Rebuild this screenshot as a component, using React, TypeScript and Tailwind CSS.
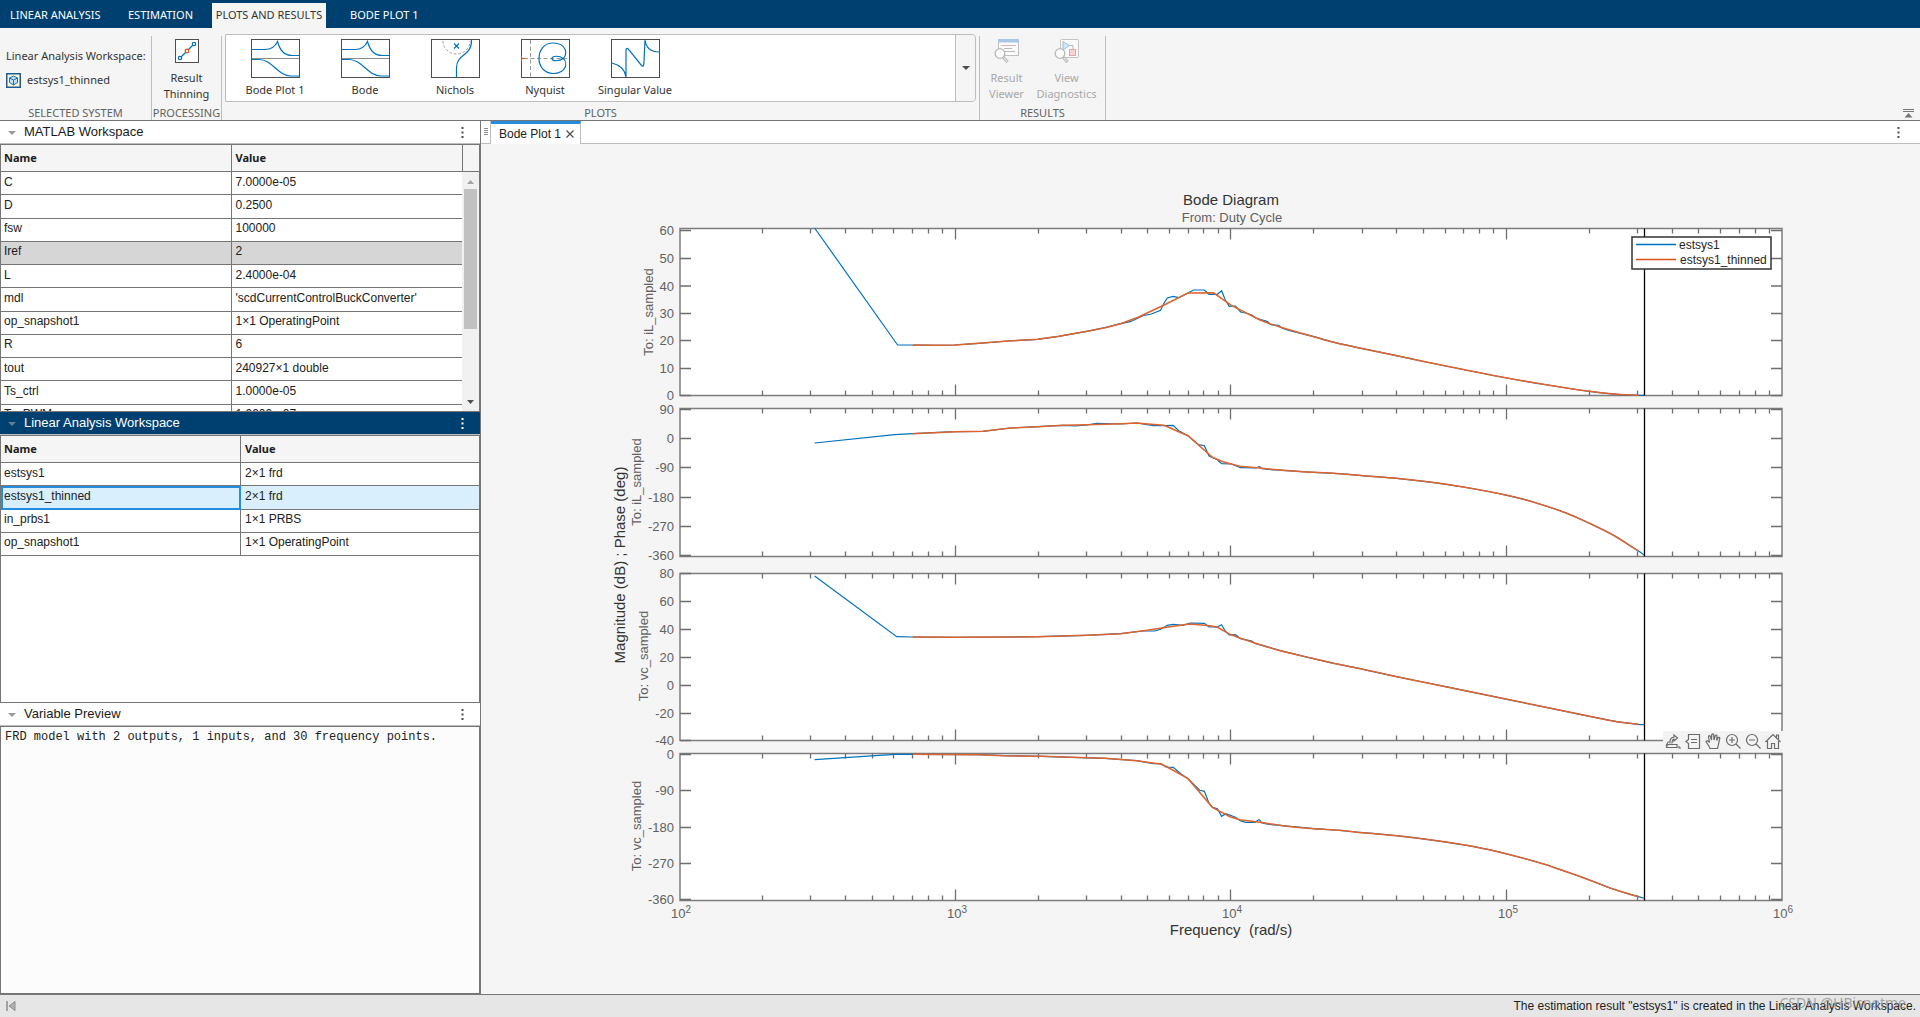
import type { ReactNode } from "react";

const UI = "font-['Noto_Sans','Open_Sans',sans-serif]";

/* ---------- toolstrip icons ---------- */

function PlotFrame({ children }: { children: ReactNode }) {
  return (
    <svg width="49" height="39" viewBox="0 0 49 39" fill="none" aria-hidden="true">
      <rect x="0.5" y="0.5" width="48" height="38" fill="#fff" stroke="#4d4d4d" />
      {children}
    </svg>
  );
}

function BodeIcon() {
  return (
    <PlotFrame>
      <path d="M1 19.5H48" stroke="#8c8c8c" />
      <path d="M1 10.5H14C20 10.5 24 8 26.500 2.500C28.500 10 32 16.500 41 16.500H48" stroke="#0072bd" strokeWidth="1.200" />
      <path d="M1 20.5H8C21 20.500 27 37 40 37H48" stroke="#0072bd" strokeWidth="1.200" />
    </PlotFrame>
  );
}

function NicholsIcon() {
  return (
    <PlotFrame>
      <path d="M12 2A13.500 13 0 0 0 39 2" stroke="#999" strokeDasharray="2.500 2" />
      <path d="M23 4.500L28 9.500M28 4.500L23 9.500" stroke="#0072bd" strokeWidth="1.200" />
      <path d="M40.500 1C41 18 25.500 14 25.500 29V38" stroke="#0072bd" strokeWidth="1.200" />
    </PlotFrame>
  );
}

function NyquistIcon() {
  return (
    <PlotFrame>
      <path d="M9.500 1V38" stroke="#999" strokeDasharray="4 2.500" />
      <path d="M3 19.500H46" stroke="#999" strokeDasharray="4 2.500" />
      <path d="M0.500 17V22M0 19.500H4" stroke="#d95319" strokeWidth="1.200" />
      <path
        d="M42 19.500C47 16 46 4 32 4C23 4 18 11 18 19.500C18 28 24 34.500 32 34.500C46 34.500 47 23 42 19.500C39 16.500 31 16.500 31 19.500C31 22.500 39 22.500 42 19.500"
        stroke="#0072bd"
        strokeWidth="1.200"
      />
    </PlotFrame>
  );
}

function SingularIcon() {
  return (
    <PlotFrame>
      <path
        d="M1 24C9 26 14 31 15 38V10.500Q16 8 18 11L30.500 26.500Q33 29 33 22L34 1C35 8 39 13 48 13"
        stroke="#0072bd"
        strokeWidth="1.200"
      />
    </PlotFrame>
  );
}

function ThinningIcon() {
  return (
    <svg width="24" height="24" viewBox="0 0 24 24" fill="none" aria-hidden="true">
      <rect x="0.5" y="0.5" width="23" height="23" fill="#fff" stroke="#4d4d4d" />
      <path d="M5 19L19 5" stroke="#0072bd" strokeWidth="1.300" />
      <circle cx="5" cy="19" r="1.700" fill="#fff" stroke="#0072bd" strokeWidth="1.200" />
      <circle cx="19" cy="5" r="1.700" fill="#fff" stroke="#0072bd" strokeWidth="1.200" />
      <circle cx="12" cy="12" r="1.800" fill="#fff" stroke="#d95319" strokeWidth="1.300" />
    </svg>
  );
}

function CubeIcon() {
  return (
    <svg width="15" height="15" viewBox="0 0 15 15" fill="none" aria-hidden="true">
      <rect x="0.75" y="0.75" width="13.500" height="13.500" fill="#fdf6d0" stroke="#1f5c99" strokeWidth="1.500" />
      <path d="M7.500 3L11.500 5V9.500L7.500 12L3.500 9.500V5Z" fill="#bfe0f7" stroke="#1f6fb5" strokeLinejoin="round" />
      <path d="M3.500 5L7.500 7L11.500 5M7.500 7V12" stroke="#1f6fb5" />
    </svg>
  );
}

function Magnifier() {
  return (
    <>
      <circle cx="6" cy="14.500" r="4.800" fill="#fbfbfb" stroke="#b8b8b8" strokeWidth="1.300" />
      <path d="M9.500 18.500L13.500 23" stroke="#b8b8b8" strokeWidth="3.200" />
      <path d="M10 19L13.200 22.600" stroke="#e4e4e4" strokeWidth="1.200" />
    </>
  );
}

function ResultViewerIcon() {
  return (
    <svg width="25" height="24" viewBox="0 0 25 24" fill="none" aria-hidden="true">
      <rect x="4.500" y="0.500" width="20" height="16" fill="#fbfbfb" stroke="#bdbdbd" />
      <rect x="4" y="0" width="21" height="3.500" fill="#a9c6e6" />
      <path d="M7 6.500H22" stroke="#e0b5ab" />
      <path d="M10 9.500H18M11 12.500H21" stroke="#b8b8b8" />
      <Magnifier />
    </svg>
  );
}

function DiagnosticsIcon() {
  return (
    <svg width="25" height="24" viewBox="0 0 25 24" fill="none" aria-hidden="true">
      <rect x="6.500" y="0.500" width="18" height="18" rx="1" fill="#fafafa" stroke="#c4c4c4" />
      <path d="M9 2.500V11L15.500 6.500Z" fill="#d4e6f7" stroke="#9dbfe0" />
      <path d="M15.500 6.500H19V10" stroke="#b8b8b8" />
      <rect x="15.500" y="10.500" width="6" height="6" fill="#f9d3d3" stroke="#e3a6a6" />
      <Magnifier />
    </svg>
  );
}

/* ---------- header bar and toolstrip ---------- */

function TabBar() {
  return (
    <nav role="tablist" className={`flex h-7 items-end bg-[#004070] pl-0.5 text-[11px] text-white ${UI}`}>
      <button type="button" role="tab" aria-selected="false" className="h-[25px] w-[106px] whitespace-nowrap pl-2 text-left">
        LINEAR ANALYSIS
      </button>
      <button type="button" role="tab" aria-selected="false" className="h-[25px] w-[104px] pl-5 text-left">
        ESTIMATION
      </button>
      <button type="button" role="tab" aria-selected="true" className="h-[25px] w-[114px] whitespace-nowrap bg-[#f5f5f5] text-center text-[#333]">
        PLOTS AND RESULTS
      </button>
      <button type="button" role="tab" aria-selected="false" className="ml-2 h-[25px] px-4">
        BODE PLOT 1
      </button>
    </nav>
  );
}

function GroupLabel({ children }: { children: ReactNode }) {
  return <div className="mt-auto text-center leading-[14px] text-[#616161]">{children}</div>;
}

const GALLERY = [
  { label: "Bode Plot 1", icon: <BodeIcon /> },
  { label: "Bode", icon: <BodeIcon /> },
  { label: "Nichols", icon: <NicholsIcon /> },
  { label: "Nyquist", icon: <NyquistIcon /> },
  { label: "Singular Value", icon: <SingularIcon /> },
];

function Toolstrip() {
  return (
    <div className={`flex h-[93px] items-stretch border-b border-[#767676] bg-[#f5f5f5] pt-2 text-[11px] text-[#333] ${UI}`}>
      <section className="flex w-[152px] flex-col border-r border-[#bdbdbd]">
        <div className="mt-3 pl-1.5 leading-4">Linear Analysis Workspace:</div>
        <div className="mt-2 flex items-center gap-1.5 pl-1.5 leading-4">
          <CubeIcon />
          <span>estsys1_thinned</span>
        </div>
        <GroupLabel>SELECTED SYSTEM</GroupLabel>
      </section>

      <section className="flex w-[70px] flex-col border-r border-[#bdbdbd]">
        <button type="button" className="flex flex-col items-center pt-[3px] leading-4">
          <ThinningIcon />
          <span className="mt-[7px]">
            Result
            <br />
            Thinning
          </span>
        </button>
        <GroupLabel>PROCESSING</GroupLabel>
      </section>

      <section className="flex w-[758px] flex-col border-r border-[#bdbdbd] pl-[3px] pr-[3px]">
        <div className="-mt-0.5 flex h-[68px] rounded-r border border-[#bdbdbd] bg-white">
          <div className="flex grow pl-1">
            {GALLERY.map((g) => (
              <button key={g.label} type="button" className="flex w-[90px] flex-col items-center pt-1">
                {g.icon}
                <span className="mt-1 leading-4">{g.label}</span>
              </button>
            ))}
          </div>
          <button
            type="button"
            aria-label="More plots"
            className="flex w-5 items-center justify-center rounded-r border-l border-[#bdbdbd] bg-[#f5f5f5]"
          >
            <svg width="8" height="4" viewBox="0 0 8 4" aria-hidden="true">
              <path d="M0 0H8L4 4Z" fill="#4d4d4d" />
            </svg>
          </button>
        </div>
        <GroupLabel>PLOTS</GroupLabel>
      </section>

      <section className="flex w-[126px] flex-col border-r border-[#bdbdbd]">
        <div className="flex pt-[3px]">
          <button type="button" disabled className="flex w-[53px] flex-col items-center leading-4 text-[#a8a8a8]">
            <ResultViewerIcon />
            <span className="mt-[7px]">
              Result
              <br />
              Viewer
            </span>
          </button>
          <button type="button" disabled className="flex w-[67px] flex-col items-center leading-4 text-[#a8a8a8]">
            <DiagnosticsIcon />
            <span className="mt-[7px]">
              View
              <br />
              Diagnostics
            </span>
          </button>
        </div>
        <GroupLabel>RESULTS</GroupLabel>
      </section>

      <button type="button" aria-label="Collapse toolstrip" className="ml-auto mr-1.5 self-end pb-0.5">
        <svg width="11" height="9" viewBox="0 0 11 9" fill="none" aria-hidden="true">
          <path d="M0 0.500H11M0 2.500H11" stroke="#767676" />
          <path d="M5.500 4L9.500 8.500H1.500Z" fill="#767676" />
        </svg>
      </button>
    </div>
  );
}

/* ---------- left column ---------- */

function Dots({ className }: { className: string }) {
  return (
    <svg width="3" height="11" viewBox="0 0 3 11" className={className} aria-hidden="true">
      <path d="M0.500 0h2v2h-2zM0.500 4.500h2v2h-2zM0.500 9h2v2h-2z" fill="currentColor" />
    </svg>
  );
}

function PanelHeader({ title, active = false }: { title: string; active?: boolean }) {
  return (
    <header
      className={
        active
          ? "flex h-[23px] shrink-0 items-center border-b border-[#bdbdbd] bg-[#004070] pl-2 pr-4 text-[13px] text-white"
          : "flex h-[23px] shrink-0 items-center border-b border-[#bdbdbd] bg-white pl-2 pr-4 text-[13px] text-[#1a1a1a]"
      }
    >
      <button type="button" aria-label={`Collapse ${title}`} className="mr-2 pt-0.5">
        <svg width="8" height="4" viewBox="0 0 8 4" aria-hidden="true">
          <path d="M0 0H8L4 4Z" fill={active ? "#5f7f99" : "#9a9a9a"} />
        </svg>
      </button>
      <h2 className="grow">{title}</h2>
      <button type="button" aria-label={`${title} options`}>
        <Dots className={active ? "text-white" : "text-[#4d4d4d]"} />
      </button>
    </header>
  );
}

type Row = { name: string; value: string };

const MATLAB_VARS: Row[] = [
  { name: "C", value: "7.0000e-05" },
  { name: "D", value: "0.2500" },
  { name: "fsw", value: "100000" },
  { name: "Iref", value: "2" },
  { name: "L", value: "2.4000e-04" },
  { name: "mdl", value: "'scdCurrentControlBuckConverter'" },
  { name: "op_snapshot1", value: "1×1 OperatingPoint" },
  { name: "R", value: "6" },
  { name: "tout", value: "240927×1 double" },
  { name: "Ts_ctrl", value: "1.0000e-05" },
  { name: "Ts_PWM", value: "1.0000e-07" },
];

const LINEAR_VARS: Row[] = [
  { name: "estsys1", value: "2×1 frd" },
  { name: "estsys1_thinned", value: "2×1 frd" },
  { name: "in_prbs1", value: "1×1 PRBS" },
  { name: "op_snapshot1", value: "1×1 OperatingPoint" },
];

const TH = `h-[27px] border-b border-[#767676] text-left text-[11px] font-bold ${UI}`;
const TD = "border-b border-[#767676] pb-[3px] leading-4";

function VarTable({ rows, kind }: { rows: Row[]; kind: "matlab" | "linear" }) {
  return (
    <table
      className={
        kind === "matlab"
          ? "h-[283px] w-full table-fixed border-separate border-spacing-0 text-xs text-[#212121]"
          : "h-[120px] w-full table-fixed border-separate border-spacing-0 text-xs text-[#212121]"
      }
    >
      <thead>
        <tr className="bg-[#f5f5f5]">
          <th className={`${TH} border-r pl-[3px] ${kind === "linear" ? "w-[240px]" : ""}`}>Name</th>
          <th className={`${TH} pl-1`}>Value</th>
        </tr>
      </thead>
      <tbody>
        {rows.map((r) => {
          const hovered = r.name === "Iref";
          const selected = kind === "linear" && r.name === "estsys1_thinned";
          return (
            <tr key={r.name} className={hovered ? "bg-[#d6d6d6]" : selected ? "bg-[#daeffe]" : "bg-white"}>
              <td className={`${TD} border-r pl-[3px] ${selected ? "outline-2 -outline-offset-2 outline-[#268cdd]" : ""}`}>{r.name}</td>
              <td className={`${TD} pl-1`}>{r.value}</td>
            </tr>
          );
        })}
      </tbody>
    </table>
  );
}

function ScrollColumn() {
  return (
    <div className="flex w-[17px] shrink-0 flex-col">
      <div className="h-[27px] shrink-0 border-b border-l border-[#767676] bg-[#f5f5f5]" />
      <div className="flex grow flex-col items-center bg-[#f1f1f1] pt-2">
        <svg width="7" height="4" viewBox="0 0 7 4" aria-hidden="true">
          <path d="M0 4H7L3.500 0Z" fill="#a3a3a3" />
        </svg>
        <div className="mt-[5px] h-[140px] w-[13px] bg-[#c1c1c1]" />
        <svg width="7" height="4" viewBox="0 0 7 4" className="mb-[7px] mt-auto" aria-hidden="true">
          <path d="M0 0H7L3.500 4Z" fill="#505050" />
        </svg>
      </div>
    </div>
  );
}

function LeftColumn() {
  return (
    <aside className="flex w-[481px] shrink-0 flex-col border-r border-[#767676] bg-white">
      <section className="flex min-h-0 flex-1 flex-col">
        <PanelHeader title="MATLAB Workspace" />
        <div className="flex min-h-0 grow overflow-hidden border border-[#767676]">
          <div className="h-full min-w-0 grow overflow-hidden">
            <VarTable rows={MATLAB_VARS} kind="matlab" />
          </div>
          <ScrollColumn />
        </div>
      </section>
      <section className="flex min-h-0 flex-1 flex-col">
        <PanelHeader title="Linear Analysis Workspace" active />
        <div className="min-h-0 grow border border-[#767676]">
          <VarTable rows={LINEAR_VARS} kind="linear" />
        </div>
      </section>
      <section className="flex min-h-0 flex-1 flex-col">
        <PanelHeader title="Variable Preview" />
        <pre className="min-h-0 grow border border-[#767676] bg-[#fcfcfc] px-1 pt-0.5 font-['Liberation_Mono','Courier_New',monospace] text-xs leading-4 text-[#212121]">
          FRD model with 2 outputs, 1 inputs, and 30 frequency points.
        </pre>
      </section>
    </aside>
  );
}

/* ---------- bode chart ---------- */

const X0 = 680;
const X1 = 1782;
const DECADE = 275.6;
const NYQUIST = 1644.5;

type Pt = [number, number];
type Panel = {
  top: number;
  bottom: number;
  ticks: [string, number][];
  label: string;
  labelX: number;
  labelY: number;
  full: Pt[];
  thinned: Pt[];
};

const TAIL_IL: Pt[] = [[1313.900,336.700],[1335.500,342.700],[1362.900,348.700],[1396.700,355.700],[1423.700,361.500],[1463.300,369.500],[1507,378],[1547.800,385],[1589.400,391.300],[1617,394.300],[1638.400,395.300]];
const HEAD_IL: Pt[] = [[912.700,345],[936.700,345.300],[954.800,345],[978.800,343.300],[1008,341],[1037.700,339.300],[1058.800,336.300],[1087,331.300],[1105,327.700],[1120.600,323.700]];

const TAIL_PH1: Pt[] = [[1282.400,470.300],[1313.900,472.300],[1339.600,473.700],[1362.900,475.700],[1396.700,478.300],[1423.700,481.300],[1463.300,487],[1507,495.300],[1535.500,502.700],[1568,513.700],[1589.400,523.300],[1613,535],[1638.400,551]];
const HEAD_PH1: Pt[] = [[912.700,433.700],[954.800,431.700],[983,431.300],[1010.400,428],[1037.700,426.700],[1063,425.300]];

const TAIL_VC: Pt[] = [[1260,644.700],[1282.400,651.200],[1313.900,658.700],[1335.500,663.700],[1362.900,669.300],[1396.700,676.700],[1445.700,686.700],[1507,699.300],[1547.800,707.700],[1589.400,716.300],[1617,721.700],[1638.400,724.300]];
const HEAD_VC: Pt[] = [[912.700,637],[954.800,637.300],[1004,637],[1037.700,636.700],[1087,635.300],[1120.600,633.700]];

const TAIL_PH2: Pt[] = [[1282.400,825.700],[1313.900,828.700],[1339.600,830.300],[1362.900,832.700],[1396.700,835.700],[1433.500,840.300],[1474.300,846.700],[1507,854],[1543.700,864],[1568,872.300],[1589.400,880],[1613,889],[1638.400,896.700]];
const HEAD_PH2: Pt[] = [[912.700,754.300],[978.800,754.700],[1004,755.700],[1042,756.300],[1071.400,757.300],[1105,758.300],[1136.600,760.700]];

const PANELS: Panel[] = [
  {
    top: 228.5,
    bottom: 395.5,
    ticks: [["60", 230.5], ["50", 258.5], ["40", 286], ["30", 313.5], ["20", 340.5], ["10", 368.5], ["0", 395.5]],
    label: "To: iL_sampled",
    labelX: 653,
    labelY: 312,
    full: [
      [814.600,228],[897.600,345],...HEAD_IL,[1130.300,321.700],[1143,315.700],[1151.300,314],[1160.600,310.300],[1163.500,304],[1167.300,298],[1173.200,296.300],[1178.700,297.700],[1188,293],[1193.400,290],[1204.400,290],[1209,294.300],[1217.400,294.300],[1221.600,290.700],[1225,299.300],[1229.200,306.300],[1235.500,306],[1240.600,312],[1246,313],[1251.800,315],[1256,318.300],[1267,321.300],[1271,324.700],[1278.400,325.300],[1282.400,328.300],[1294.700,332],...TAIL_IL,[1644.500,395.300],
    ],
    thinned: [...HEAD_IL,[1138.700,317],[1164,305],[1188,293],[1213.500,292.800],[1231.400,305.300],[1260,320],[1282.400,327.700],...TAIL_IL],
  },
  {
    top: 408.5,
    bottom: 556.5,
    ticks: [["90", 409.5], ["0", 438.5], ["-90", 467.5], ["-180", 497.5], ["-270", 526.5], ["-360", 555.5]],
    label: "To: iL_sampled",
    labelX: 641,
    labelY: 482,
    full: [
      [814.600,443],[894.600,434.700],...HEAD_PH1,[1075.600,426],[1087,425],[1096.600,423.300],[1120.600,424],[1136.600,423],[1153.500,425.700],[1164,425.600],[1173.200,425.300],[1178.700,430.700],[1188,435.700],[1198.500,444.700],[1204.400,445.700],[1209,456],[1217.400,459.700],[1221.600,463.700],[1231.300,464],[1240.600,467.700],[1256,468],[1259.200,466.700],[1262,468.700],...TAIL_PH1,[1644.500,555],
    ],
    thinned: [...HEAD_PH1,[1087,424.700],[1121.900,423.700],[1136.600,423],[1148,424],[1164,425.300],[1178.700,431.700],[1188,435.700],[1212.400,457.300],[1222.900,461.700],[1239.700,466.300],[1260,468],...TAIL_PH1],
  },
  {
    top: 573.5,
    bottom: 740.5,
    ticks: [["80", 573.5], ["60", 601.5], ["40", 629.5], ["20", 657.5], ["0", 685.5], ["-20", 713.5], ["-40", 740.5]],
    label: "To: vc_sampled",
    labelX: 648,
    labelY: 656,
    full: [
      [814.600,576],[896.700,636.700],...HEAD_VC,[1143,631],[1154.700,631],[1160.600,629.300],[1167.300,625.300],[1173.200,624.300],[1183,625.300],[1190,623],[1204.400,623.300],[1209,627],[1217.400,627],[1221.600,624.700],[1225,630.700],[1229.200,635],[1235.500,634.700],[1240.600,638.700],[1251.800,641],[1256,644],...TAIL_VC,[1644.500,724.700],
    ],
    thinned: [...HEAD_VC,[1147,630.300],[1170.300,626.700],[1189.200,624],[1210.300,625.700],[1217.400,627.300],[1230,634.300],[1239.700,638],...TAIL_VC],
  },
  {
    top: 753.5,
    bottom: 900.5,
    ticks: [["0", 754.5], ["-90", 790.5], ["-180", 827.5], ["-270", 863.5], ["-360", 899.5]],
    label: "To: vc_sampled",
    labelX: 641,
    labelY: 826,
    full: [
      [814.600,759.700],[894.600,754.300],...HEAD_PH2,[1153.500,763.700],[1160.600,763.700],[1166,767],[1173.200,767.300],[1180.800,773.700],[1188,778.700],[1199.700,790.300],[1204.400,791.300],[1209,803.300],[1212.400,807.300],[1217.400,808.700],[1221.600,816.300],[1225.800,813.700],[1235.500,817.300],[1240.600,821],[1246,822.300],[1255,822.300],[1259,819.500],[1262,823],...TAIL_PH2,[1644.500,898.300],
    ],
    thinned: [...HEAD_PH2,[1161.900,764.300],[1174.500,771],[1188,778.700],[1212.400,807.300],[1230,816.700],[1239.700,819.700],[1260,822.300],...TAIL_PH2],
  },
];

/* Straight segments up to the resonance, then a Catmull-Rom spline through the dense samples. */
const SPLINE_FROM = 1258;

function curve(pts: Pt[]) {
  let d = `M${pts[0][0]} ${pts[0][1]}`;
  for (let i = 1; i < pts.length; i++) {
    const a = pts[i - 1];
    const b = pts[i];
    if (a[0] < SPLINE_FROM) {
      d += `L${b[0]} ${b[1]}`;
      continue;
    }
    const before = pts[i - 2] ?? a;
    const after = pts[i + 1] ?? b;
    const h = (b[0] - a[0]) / 3;
    const slopeA = (b[1] - before[1]) / (b[0] - before[0]);
    const slopeB = (after[1] - a[1]) / (after[0] - a[0]);
    d += `C${a[0] + h} ${a[1] + h * slopeA} ${b[0] - h} ${b[1] - h * slopeB} ${b[0]} ${b[1]}`;
  }
  return d;
}

function frequencyTicks(top: number, bottom: number) {
  let d = "";
  for (let dec = 0; dec < 4; dec++) {
    for (let m = 1; m < 10; m++) {
      if (dec === 0 && m === 1) continue;
      const x = Math.round(X0 + DECADE * (dec + Math.log10(m))) - 0.5;
      const len = m === 1 ? 11 : 5;
      d += `M${x} ${top}v${len}M${x} ${bottom}v${-len}`;
    }
  }
  return d;
}

function PanelPlot({ p }: { p: Panel }) {
  const valueTicks = p.ticks.map(([, y]) => `M${X0} ${y}h11M${X1} ${y}h-11`).join("");
  return (
    <g>
      <rect x={X0} y={p.top} width={X1 - X0} height={p.bottom - p.top} fill="#fff" stroke="#7d7d7d" strokeWidth="1.500" />
      <path d={frequencyTicks(p.top, p.bottom) + valueTicks} stroke="#6e6e6e" strokeWidth="1.300" />
      {p.ticks.map(([t, y]) => (
        <text key={t} x="674" y={Math.floor(y) + 5} textAnchor="end" fontSize="13" fill="#616161">
          {t}
        </text>
      ))}
      <text
        x={p.labelX}
        y={p.labelY}
        transform={`rotate(-90 ${p.labelX} ${p.labelY})`}
        textAnchor="middle"
        fontSize="13"
        fill="#616161"
      >
        {p.label}
      </text>
      <path d={curve(p.full)} stroke="#0072bd" strokeWidth="1.200" />
      <path d={curve(p.thinned)} stroke="#e0622c" strokeWidth="1.500" />
      <path d={`M${NYQUIST} ${p.top}V${p.bottom}`} stroke="#000" strokeWidth="1.300" />
    </g>
  );
}

function BodeChart() {
  return (
    <svg
      viewBox="481 144 1439 850"
      className="h-full w-full font-['Liberation_Sans',Arial,sans-serif]"
      fill="none"
      role="img"
      aria-label="Bode Diagram"
    >
      <text x="1231" y="205" textAnchor="middle" fontSize="15" fill="#333">Bode Diagram</text>
      <text x="1232" y="222" textAnchor="middle" fontSize="13" fill="#616161">From: Duty Cycle</text>
      {PANELS.map((p) => (
        <PanelPlot key={p.top} p={p} />
      ))}
      {[2, 3, 4, 5, 6].map((e) => (
        <text key={e} x={Math.round(X0 + DECADE * (e - 2)) - 9} y="918" fontSize="13" fill="#616161">
          10
          <tspan dy="-5" fontSize="10">{e}</tspan>
        </text>
      ))}
      <text x="1231" y="935" textAnchor="middle" fontSize="15" fill="#333" className="whitespace-pre">
        {"Frequency  (rad/s)"}
      </text>
      <text x="625" y="565" transform="rotate(-90 625 565)" textAnchor="middle" fontSize="15" fill="#333">
        Magnitude (dB) ; Phase (deg)
      </text>
      <g>
        <rect x="1632" y="237" width="139" height="32" fill="#fff" stroke="#333" strokeWidth="1.500" />
        <path d="M1636 244.500H1676" stroke="#0072bd" strokeWidth="1.300" />
        <path d="M1636 259.500H1676" stroke="#d95319" strokeWidth="1.300" />
        <text x="1679" y="249" fontSize="12" fill="#262626">estsys1</text>
        <text x="1680" y="264" fontSize="12" fill="#262626">estsys1_thinned</text>
      </g>
    </svg>
  );
}

const TOOLS: { label: string; art: ReactNode }[] = [
  {
    label: "Export",
    art: <path d="M1 12.500L3.500 8.500M1 14.500H12V11.500H3L1 14.500M5 10.500C4.500 7 6 4.500 9 4V2L12.500 5L9 8V6.200C7.500 6.500 7 8 7 10.500M14 13V15H16" />,
  },
  { label: "Data tips", art: <path d="M3.500 1.500H14.500V15.500H3.500V10.500L1 8.500L3.500 6.500ZM6 6.500H12M6 9.500H12" /> },
  {
    label: "Pan",
    art: <path d="M5 15.500C4 12.500 2 10.500 1 8.500C1.500 7.300 3 7.500 4.500 9.500L3.500 3.500C4 2.300 5 2.500 5.500 3.700L6.500 7L6.700 1.700C7.300 0.500 8.500 0.700 8.700 1.800L9 7L10.300 2.500C11 1.600 12 2 12 3L11.700 7.500L13.300 4.500C14.300 4 15 4.700 14.700 5.700C14 9 13.500 12 12.500 15.500Z" />,
  },
  { label: "Zoom in", art: <path d="M7 1.500A5.500 5.500 0 1 0 7 12.500A5.500 5.500 0 1 0 7 1.500M11 11L15.500 15.500M4 7H10M7 4V10" /> },
  { label: "Zoom out", art: <path d="M7 1.500A5.500 5.500 0 1 0 7 12.500A5.500 5.500 0 1 0 7 1.500M11 11L15.500 15.500M4 7H10" /> },
  { label: "Restore view", art: <path d="M0.500 9L8 1.500L15.500 9M2.500 8V15.500H6.500V10.500H9.500V15.500H13.500V8M11.500 4.500V2H13.500V6.500" /> },
];

function PlotToolbar() {
  return (
    <div className="absolute right-[137px] top-[587px] flex h-5 bg-[#f3f3f3]">
      {TOOLS.map((t) => (
        <button key={t.label} type="button" aria-label={t.label} className="flex w-5 items-center justify-center">
          <svg width="16" height="16" viewBox="0 0 16 16" fill="none" stroke="#6b6b6b" strokeWidth="1.200" aria-hidden="true">
            {t.art}
          </svg>
        </button>
      ))}
    </div>
  );
}

function DocumentArea() {
  return (
    <main className="flex min-w-0 grow flex-col bg-[#f5f5f5]">
      <div className="flex h-[23px] shrink-0 bg-white text-xs text-[#212121]">
        <div className="flex w-2.5 items-center justify-center border-b border-r border-[#bdbdbd]">
          <svg width="4" height="8" viewBox="0 0 4 8" aria-hidden="true">
            <path d="M0 0.500H4M0 2.500H4M0 4.500H4M0 6.500H4" stroke="#8c8c8c" />
          </svg>
        </div>
        <div role="tab" aria-selected="true" className="flex items-center gap-[5px] border-r border-t-[3px] border-r-[#bdbdbd] border-t-[#268cdd] pl-2 pr-1.5">
          <span>Bode Plot 1</span>
          <button type="button" aria-label="Close Bode Plot 1">
            <svg width="8" height="8" viewBox="0 0 8 8" aria-hidden="true">
              <path d="M0.500 0.500L7.500 7.500M7.500 0.500L0.500 7.500" stroke="#4d4d4d" strokeWidth="1.200" />
            </svg>
          </button>
        </div>
        <div className="flex grow items-center justify-end border-b border-[#bdbdbd] pr-5">
          <button type="button" aria-label="Document options">
            <Dots className="text-[#4d4d4d]" />
          </button>
        </div>
      </div>
      <div className="relative min-h-0 grow">
        <BodeChart />
        <PlotToolbar />
      </div>
    </main>
  );
}

function StatusBar() {
  return (
    <footer className="relative flex h-[23px] shrink-0 items-center justify-between border-t border-[#767676] bg-[#e6e6e6] pl-1.5 pr-1 text-xs text-[#212121]">
      <button type="button" aria-label="Collapse left panel">
        <svg width="10" height="10" viewBox="0 0 10 10" fill="none" aria-hidden="true">
          <path d="M1 0V10" stroke="#8c8c8c" strokeWidth="1.500" />
          <path d="M9 0.500V9.500L3 5Z" fill="#b0b0b0" stroke="#8c8c8c" />
        </svg>
      </button>
      <span>The estimation result "estsys1" is created in the Linear Analysis Workspace.</span>
      <span className="pointer-events-none absolute right-3.5 top-0 whitespace-nowrap font-['Noto_Sans',sans-serif] text-sm leading-4 text-[#8a8a8a]/75">
        CSDN @HBisnotme
      </span>
    </footer>
  );
}

export default function App() {
  return (
    <div className="flex h-screen flex-col overflow-hidden bg-[#f5f5f5] font-['Liberation_Sans',Arial,sans-serif]">
      <TabBar />
      <Toolstrip />
      <div className="flex min-h-0 grow">
        <LeftColumn />
        <DocumentArea />
      </div>
      <StatusBar />
    </div>
  );
}
